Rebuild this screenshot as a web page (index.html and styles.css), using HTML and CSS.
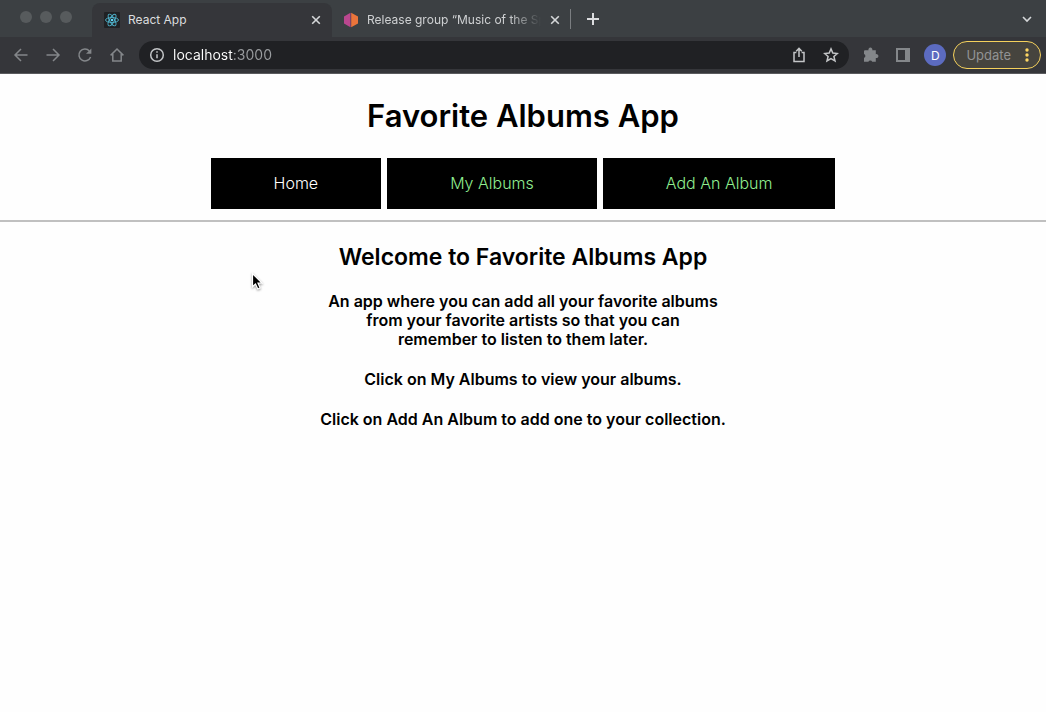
FILE: index.html
```html
<!DOCTYPE html>
<html lang="en">
<head>
<meta charset="utf-8">
<meta name="viewport" content="width=device-width, initial-scale=1">
<title>React App</title>
<link rel="stylesheet" href="styles.css">
</head>
<body>
<header class="browser">
  <div class="tab-strip">
    <div class="window-controls">
      <button class="window-dot" aria-label="Close window"></button>
      <button class="window-dot" aria-label="Minimize window"></button>
      <button class="window-dot" aria-label="Zoom window"></button>
    </div>
    <div class="tab tab-active">
      <svg class="favicon" viewBox="0 0 16 16" aria-hidden="true">
        <rect width="16" height="16" rx="1" fill="#202124"/>
        <g fill="none" stroke="#4fb3cc" stroke-width="0.9">
          <ellipse cx="8" cy="8" rx="6.5" ry="2.5"/>
          <ellipse cx="8" cy="8" rx="6.5" ry="2.5" transform="rotate(60 8 8)"/>
          <ellipse cx="8" cy="8" rx="6.5" ry="2.5" transform="rotate(120 8 8)"/>
        </g>
        <circle cx="8" cy="8" r="1.3" fill="#61dafb"/>
      </svg>
      <span class="tab-title">React App</span>
      <button class="tab-close" aria-label="Close React App tab">
        <svg viewBox="0 0 10 10" class="icon-close"><path d="M1.2 1.2l7.6 7.6M8.8 1.2L1.2 8.8"/></svg>
      </button>
    </div>
    <div class="tab tab-inactive">
      <svg class="favicon" viewBox="0 0 16 16" aria-hidden="true">
        <path d="M7.5 0.8V15.2L1 11.6V4.4z" fill="#ba478f"/>
        <path d="M8.2 0.8V15.2L15 11.6V4.4z" fill="#eb743b"/>
      </svg>
      <span class="tab-title tab-title-faded">Release group “Music of the Sp</span>
      <button class="tab-close" aria-label="Close Release group tab">
        <svg viewBox="0 0 10 10" class="icon-close"><path d="M1.2 1.2l7.6 7.6M8.8 1.2L1.2 8.8"/></svg>
      </button>
    </div>
    <button class="new-tab" aria-label="New tab">
      <svg viewBox="0 0 12 12" class="icon-plus"><path d="M6 0v12M0 6h12"/></svg>
    </button>
    <button class="tab-search" aria-label="Search tabs">
      <svg viewBox="0 0 10 10" class="icon-close"><path d="M1 3l4 4 4-4"/></svg>
    </button>
  </div>
  <div class="toolbar">
    <div class="history">
      <button class="tool" aria-label="Back"><svg class="icon line" viewBox="0 0 16 16"><path d="M14.5 8H2M8 2L2 8l6 6"/></svg></button>
      <button class="tool" aria-label="Forward"><svg class="icon line" viewBox="0 0 16 16"><path d="M1.5 8H14M8 2l6 6-6 6"/></svg></button>
      <button class="tool" aria-label="Reload"><svg class="icon line" viewBox="0 0 16 16"><path d="M13.6 10A6 6 0 1 1 12.4 3.9"/><path d="M14.4 1.4v5.4H9z" fill="#84878a" stroke="none"/></svg></button>
      <button class="tool" aria-label="Home"><svg class="icon line" viewBox="0 0 16 16"><path d="M1.6 8.4L8 2l6.4 6.4M3.8 7v7h8.4V7"/></svg></button>
    </div>
    <div class="address">
      <svg class="icon line light" viewBox="0 0 16 16" aria-hidden="true"><circle cx="8" cy="8" r="6.3"/><path d="M8 7.2v4M8 4.3v1.5"/></svg>
      <input class="address-input" type="text" aria-label="Address" value="localhost:3000">
      <button class="tool" aria-label="Share"><svg class="icon line light" viewBox="0 0 16 16"><path d="M5.4 5.5H3v9h10v-9h-2.4M8 10V1.5M5.2 4.2L8 1.4l2.8 2.8"/></svg></button>
      <button class="tool" aria-label="Bookmark"><svg class="icon line light" viewBox="0 0 16 16"><path d="M8 1.9l1.8 4.2 4.6.4-3.5 3 1.1 4.5L8 11.6 4 14l1.1-4.5-3.5-3 4.6-.4z"/></svg></button>
    </div>
    <button class="tool" aria-label="Extensions"><svg class="icon solid" viewBox="0 0 16 16"><path d="M2 3.2h3.5a2 2 0 1 1 3.8 0h3.5v4a2 2 0 1 1 0 3.8v3.8H9.2a2 2 0 0 0-3.8 0H1v-4a2 2 0 0 0 0-3.8V4.2a1 1 0 0 1 1-1z"/></svg></button>
    <button class="tool" aria-label="Side panel"><svg class="icon solid" viewBox="0 0 16 16"><path fill-rule="evenodd" d="M1 1h14v14H1zM3 3v10h7V3z"/></svg></button>
    <button class="avatar" aria-label="Profile D">D</button>
    <button class="update">Update
      <svg class="dots" viewBox="0 0 4 14" aria-hidden="true"><circle cx="2" cy="2" r="1.7"/><circle cx="2" cy="7" r="1.7"/><circle cx="2" cy="12" r="1.7"/></svg>
    </button>
  </div>
</header>
<main class="app">
  <h1 class="app-title">Favorite Albums App</h1>
  <nav class="app-nav">
    <a class="nav-link nav-current" href="#home">Home</a>
    <a class="nav-link" href="#albums">My Albums</a>
    <a class="nav-link" href="#add">Add An Album</a>
  </nav>
  <hr class="divider">
  <section class="welcome">
    <h2 class="welcome-title">Welcome to Favorite Albums App</h2>
    <p class="intro">An app where you can add all your favorite albums<br>from your favorite artists so that you can<br>remember to listen to them later.</p>
    <p class="intro">Click on My Albums to view your albums.</p>
    <p class="intro">Click on Add An Album to add one to your collection.</p>
  </section>
</main>
<svg class="cursor" viewBox="0 0 14 20" aria-hidden="true"><path d="M1.5 1.5V14.8l3-2.8 2.3 5 2.4-1.1L7 11.2h4z" fill="#000" stroke="#fff" stroke-width="1.2"/></svg>
</body>
</html>
```
FILE: styles.css
```css
* { box-sizing: border-box; }

body {
  margin: 0;
  background: #fefefe;
  color: #000;
  font-family: Inter, "Liberation Sans", sans-serif;
}

button {
  display: flex;
  align-items: center;
  justify-content: center;
  padding: 0;
  border: 0;
  background: none;
  font: inherit;
  color: inherit;
}

.browser {
  background: #35363a;
  border-bottom: 1px solid #5a5b5e;
}

.tab-strip {
  display: flex;
  align-items: center;
  height: 37px;
  background: #3c4043;
}

.window-controls {
  display: flex;
  flex: none;
  gap: 8px;
  width: 92px;
  height: 37px;
  padding: 11px 20px;
}

.window-dot {
  width: 12px;
  height: 12px;
  border-radius: 50%;
  background: #575b5d;
}

.tab {
  display: flex;
  flex: 0 1 240px;
  align-items: center;
  gap: 8px;
  min-width: 0;
  height: 34px;
  margin-top: 3px;
  padding: 0 10px 0 12px;
  color: #cfd1d3;
  font-size: 12px;
}

.tab-active {
  border-radius: 8px 8px 0 0;
  background: #35363a;
  color: #dcdddf;
}

.tab-inactive {
  flex-basis: 238px;
  padding: 0 9px 0 11px;
}

.favicon {
  flex: none;
  width: 16px;
  height: 16px;
}

.tab-title {
  flex: 1;
  overflow: hidden;
  font-weight: 400;
  line-height: 16px;
  white-space: nowrap;
}

.tab-title-faded {
  mask-image: linear-gradient(to right, #000 calc(100% - 32px), transparent);
}

.tab-close {
  flex: none;
  width: 12px;
  height: 16px;
}

.icon-close {
  width: 10px;
  height: 10px;
  fill: none;
  stroke: #d5d7d9;
  stroke-width: 1.6;
}

.new-tab {
  width: 44px;
  height: 20px;
  border-left: 1px solid #7b7e81;
}

.icon-plus {
  width: 12px;
  height: 12px;
  fill: none;
  stroke: #dcdddf;
  stroke-width: 2;
}

.tab-search {
  width: 16px;
  height: 16px;
  margin: 0 11px 0 auto;
}

.toolbar {
  display: flex;
  align-items: center;
  gap: 16px;
  height: 36px;
  padding: 0 5px 0 13px;
}

.history {
  display: flex;
  gap: 16px;
  margin-right: -2px;
}

.tool {
  flex: none;
  width: 16px;
  height: 16px;
}

.icon {
  flex: none;
  width: 16px;
  height: 16px;
}

.line {
  fill: none;
  stroke: #84878a;
  stroke-width: 1.5;
}

.light { stroke: #c3c5c7; }

.solid { fill: #84878a; }

.address {
  display: flex;
  flex: 1;
  align-items: center;
  gap: 16px;
  min-width: 0;
  height: 28px;
  margin-right: -2px;
  padding: 0 10px;
  border-radius: 14px;
  background: #202124;
}

.address-input {
  flex: 1;
  min-width: 0;
  height: 20px;
  margin-left: -8px;
  padding: 0;
  border: 0;
  outline: 0;
  color: #fff;
  font: 14px/20px Inter, "Liberation Sans", sans-serif;
  background: linear-gradient(to right, #fff 61px, #9a9da0 61px) text;
  -webkit-text-fill-color: transparent;
}

.avatar {
  flex: none;
  width: 22px;
  height: 22px;
  margin-left: -3px;
  border-radius: 50%;
  background: #5c6bc0;
  color: #fff;
  font-size: 12px;
}

.update {
  flex: none;
  gap: 14px;
  height: 28px;
  margin-left: -9px;
  padding: 0 11px 0 12px;
  border: 1px solid #f5d15c;
  border-radius: 14px;
  background: #46443e;
  color: #929394;
  font-size: 13px;
}

.dots {
  width: 4px;
  height: 14px;
  fill: #fdd663;
}

.app { text-align: center; }

.app-title {
  margin: 22px 0;
  font-size: 31px;
  font-weight: 600;
  line-height: 40px;
}

.app-nav {
  display: flex;
  justify-content: center;
  gap: 6px;
}

.nav-link {
  padding: 16px 63px;
  background: #000;
  color: #90ee90;
  font-size: 16px;
  font-weight: 300;
  line-height: 19px;
  text-decoration: none;
}

.nav-current { color: #fff; }

.divider {
  height: 2px;
  margin: 11px 0 20px;
  border: 0;
  background: #c0c0c0;
}

.welcome-title {
  margin: 0 0 20px;
  font-size: 23px;
  font-weight: 600;
  line-height: 30px;
}

.intro {
  margin: 0 0 21px;
  font-size: 16px;
  font-weight: 600;
  line-height: 19px;
}

.cursor {
  position: absolute;
  top: 272px;
  left: 251px;
  width: 14px;
  height: 20px;
  filter: drop-shadow(0 1px 1px #0006);
}
```
